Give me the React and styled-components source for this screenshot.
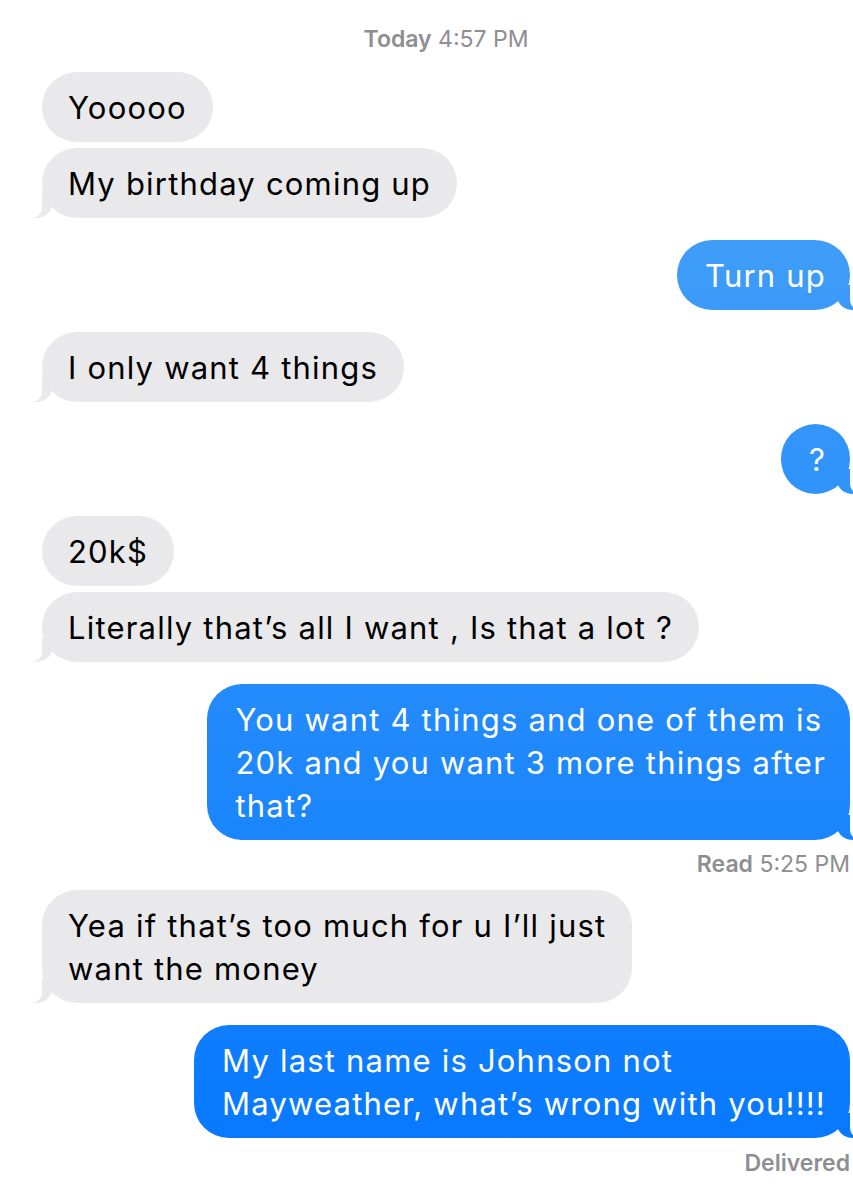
import styled, { createGlobalStyle, css } from "styled-components";

const GlobalStyle = createGlobalStyle`
  body {
    margin: 0;
    background: #fff;
    font-family: Inter, "Liberation Sans", sans-serif;
    -webkit-font-smoothing: antialiased;
  }
`;

const blueFill = css`
  background: linear-gradient(180deg, #4ea7f6 0px, #0476ff 1200px);
  background-attachment: fixed;
`;

const Screen = styled.div`
  width: 853px;
  height: 1200px;
  box-sizing: border-box;
  overflow: hidden;
  padding: 26px 3px 0 42px;
  display: flex;
  flex-direction: column;
  gap: 22px;
`;

const Stamp = styled.div`
  text-align: ${p => (p.$right ? "right" : "center")};
  font-size: 23px;
  line-height: 26px;
  color: #8e8e93;
  margin: ${p => p.$margin || "0"};

  b {
    font-weight: 600;
  }
`;

const Group = styled.div`
  display: flex;
  flex-direction: column;
  align-items: ${p => (p.$me ? "flex-end" : "flex-start")};
  gap: 6px;
`;

const Bubble = styled.div`
  position: relative;
  padding: 13.5px ${p => (p.$me ? "24px 13.5px 28px" : "26px")};
  font-size: 31px;
  line-height: 43px;
  letter-spacing: 1.2px;
  border-radius: 35px;
  white-space: nowrap;
  color: ${p => (p.$me ? "#fff" : "#000")};
  background: #e9e9eb;
  ${p => p.$me && blueFill}

  ${p =>
    p.$tail &&
    css`
      &::before,
      &::after {
        content: "";
        position: absolute;
        bottom: 0;
        height: 25px;
      }
      &::before {
        width: 20px;
        background: #e9e9eb;
        ${p.$me && blueFill}
        ${p.$me ? "right: -7px;" : "left: -10px;"}
        ${p.$me
          ? "border-bottom-left-radius: 16px 14px;"
          : "border-bottom-right-radius: 16px 14px;"}
      }
      &::after {
        width: 26px;
        background: #fff;
        ${p.$me ? "right: -26px;" : "left: -26px;"}
        ${p.$me
          ? "border-bottom-left-radius: 10px;"
          : "border-bottom-right-radius: 10px;"}
      }
    `}
`;

const thread = [
  { me: false, msgs: [["Yooooo"], ["My birthday coming up"]] },
  { me: true, msgs: [["Turn up"]] },
  { me: false, msgs: [["I only want 4 things"]] },
  { me: true, msgs: [["?"]] },
  { me: false, msgs: [["20k$"], ["Literally that\u2019s all I want , Is that a lot ?"]] },
  {
    me: true,
    msgs: [["You want 4 things and one of them is", "20k and you want 3 more things after", "that?"]],
    receipt: { label: "Read", time: "5:25 PM", margin: "-11px 0 -9px" },
  },
  { me: false, msgs: [["Yea if that\u2019s too much for u I\u2019ll just", "want the money"]] },
  {
    me: true,
    msgs: [["My last name is Johnson not", "Mayweather, what\u2019s wrong with you!!!!"]],
    receipt: { label: "Delivered", margin: "-10px 0 0" },
  },
];

const App = () => (
  <>
    <GlobalStyle />
    <Screen>
      <Stamp $margin="0 0 -2px">
        <b>Today</b> 4:57 PM
      </Stamp>
      {thread.map((g, i) => [
        <Group key={i} $me={g.me}>
          {g.msgs.map((lines, j) => (
            <Bubble key={j} $me={g.me} $tail={j === g.msgs.length - 1}>
              {lines.map((l, k) => (
                <div key={k}>{l}</div>
              ))}
            </Bubble>
          ))}
        </Group>,
        g.receipt && (
          <Stamp key={i + "r"} $right $margin={g.receipt.margin}>
            <b>{g.receipt.label}</b>
            {g.receipt.time && ` ${g.receipt.time}`}
          </Stamp>
        ),
      ])}
    </Screen>
  </>
);

export default App;
